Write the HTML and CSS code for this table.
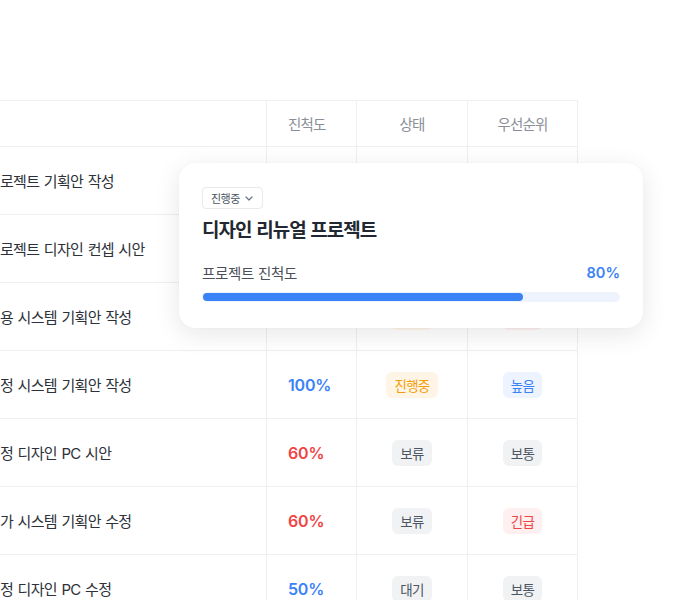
FILE: index.html
```html
<!DOCTYPE html>
<html lang="ko">
<head>
<meta charset="utf-8">
<title>프로젝트 목록</title>
<link rel="stylesheet" href="styles.css">
</head>
<body>
<div class="page">
  <div class="table">
    <div class="cell head name"></div>
    <div class="cell head prog">진척도</div>
    <div class="cell head center">상태</div>
    <div class="cell head center">우선순위</div>

    <div class="cell name">로젝트 기획안 작성</div>
    <div class="cell prog blue">100%</div>
    <div class="cell center"><span class="badge orange">진행중</span></div>
    <div class="cell center"><span class="badge blue-b">높음</span></div>

    <div class="cell name">로젝트 디자인 컨셉 시안</div>
    <div class="cell prog blue">80%</div>
    <div class="cell center"><span class="badge orange">진행중</span></div>
    <div class="cell center"><span class="badge gray">보통</span></div>

    <div class="cell name">용 시스템 기획안 작성</div>
    <div class="cell prog red">60%</div>
    <div class="cell center"><span class="badge orange">지연</span></div>
    <div class="cell center"><span class="badge red-b">긴급</span></div>

    <div class="cell name">정 시스템 기획안 작성</div>
    <div class="cell prog blue">100%</div>
    <div class="cell center"><span class="badge orange">진행중</span></div>
    <div class="cell center"><span class="badge blue-b">높음</span></div>

    <div class="cell name">정 디자인 PC 시안</div>
    <div class="cell prog red">60%</div>
    <div class="cell center"><span class="badge gray">보류</span></div>
    <div class="cell center"><span class="badge gray">보통</span></div>

    <div class="cell name">가 시스템 기획안 수정</div>
    <div class="cell prog red">60%</div>
    <div class="cell center"><span class="badge gray">보류</span></div>
    <div class="cell center"><span class="badge red-b">긴급</span></div>

    <div class="cell name">정 디자인 PC 수정</div>
    <div class="cell prog blue">50%</div>
    <div class="cell center"><span class="badge gray">대기</span></div>
    <div class="cell center"><span class="badge gray">보통</span></div>
  </div>

  <div class="card">
    <div class="pill">진행중
      <svg class="chev" width="8" height="5" viewBox="0 0 8 5"><path d="M1 1l3 3 3-3" fill="none" stroke="#6b7280" stroke-width="1.2" stroke-linecap="round" stroke-linejoin="round"/></svg>
    </div>
    <div class="title">디자인 리뉴얼 프로젝트</div>
    <div class="prow">
      <span class="plabel">프로젝트 진척도</span>
      <span class="pval">80%</span>
    </div>
    <div class="track"><div class="fill" style="width: 77%"></div></div>
  </div>
</div>
</body>
</html>
```

FILE: styles.css
```css
* { box-sizing: border-box; }
html, body { margin: 0; padding: 0; background: #fff; }
body {
  font-family: "Inter", "Noto Sans CJK KR", sans-serif;
  color: #333a44;
  overflow: hidden;
}
.page {
  position: relative;
  width: 700px;
  height: 600px;
  padding-top: 100px;
}
.table {
  display: grid;
  grid-template-columns: 267px 90px 111px 110px;
  width: 578px;
  border-top: 1px solid #efeff1;
}
.cell {
  height: 68px;
  border-right: 1px solid #efeff1;
  border-bottom: 1px solid #efeff1;
  display: flex;
  align-items: center;
  font-size: 15px;
  letter-spacing: -0.7px;
  word-spacing: 1px;
}
.cell.head {
  height: 46px;
  color: #8a8f98;
  font-size: 14.5px;
  letter-spacing: -0.8px;
}
.name { padding-left: 0; color: #2d3139; }
.prog { padding-left: 21px; }
.center { justify-content: center; }
.blue, .red {
  font-family: "Inter", sans-serif;
  font-weight: 600;
  font-size: 16px;
  letter-spacing: -0.2px;
}
.blue { color: #3b82f6; }
.red { color: #ef4444; }

.badge {
  display: inline-flex;
  align-items: center;
  height: 26px;
  padding: 0 8px;
  border-radius: 6px;
  font-size: 13.5px;
  letter-spacing: -0.7px;
}
.badge.orange { background: #fff5e6; color: #f59e0b; }
.badge.blue-b { background: #edf3ff; color: #3b82f6; }
.badge.gray { background: #f1f2f4; color: #4b5563; }
.badge.red-b { background: #fef0f0; color: #ef4444; }

.card {
  position: absolute;
  left: 179px;
  top: 163px;
  width: 464px;
  height: 165px;
  background: #fff;
  border-radius: 16px;
  box-shadow: 0 6px 26px rgba(17, 24, 39, 0.10), 0 0 2px rgba(17, 24, 39, 0.04);
  padding: 24px 23px 26px 23px;
  display: flex;
  flex-direction: column;
  align-items: flex-start;
}
.pill {
  height: 22px;
  display: inline-flex;
  align-items: center;
  gap: 5px;
  padding: 0 9px 0 8px;
  border: 1px solid #e8e9ec;
  border-radius: 4px;
  font-size: 11px;
  letter-spacing: -0.5px;
  color: #4b5563;
}
.chev { display: block; margin-top: 1px; }
.title {
  margin-top: 9px;
  line-height: 26px;
  font-size: 19px;
  font-weight: 700;
  letter-spacing: -0.95px;
  word-spacing: 1px;
  color: #222831;
}
.prow {
  margin-top: 18px;
  width: 100%;
  height: 20px;
  display: flex;
  justify-content: space-between;
  align-items: center;
}
.plabel {
  font-size: 14.5px;
  letter-spacing: -0.3px;
  color: #4b5058;
}
.pval {
  font-family: "Inter", sans-serif;
  font-size: 14.5px;
  font-weight: 600;
  color: #3b82f6;
}
.track {
  margin-top: 10px;
  width: 418px;
  height: 10px;
  padding: 1px 1px;
  border-radius: 5px;
  background: #eef4fd;
}
.fill {
  height: 8px;
  border-radius: 4px;
  background: #3b82f6;
}
```
